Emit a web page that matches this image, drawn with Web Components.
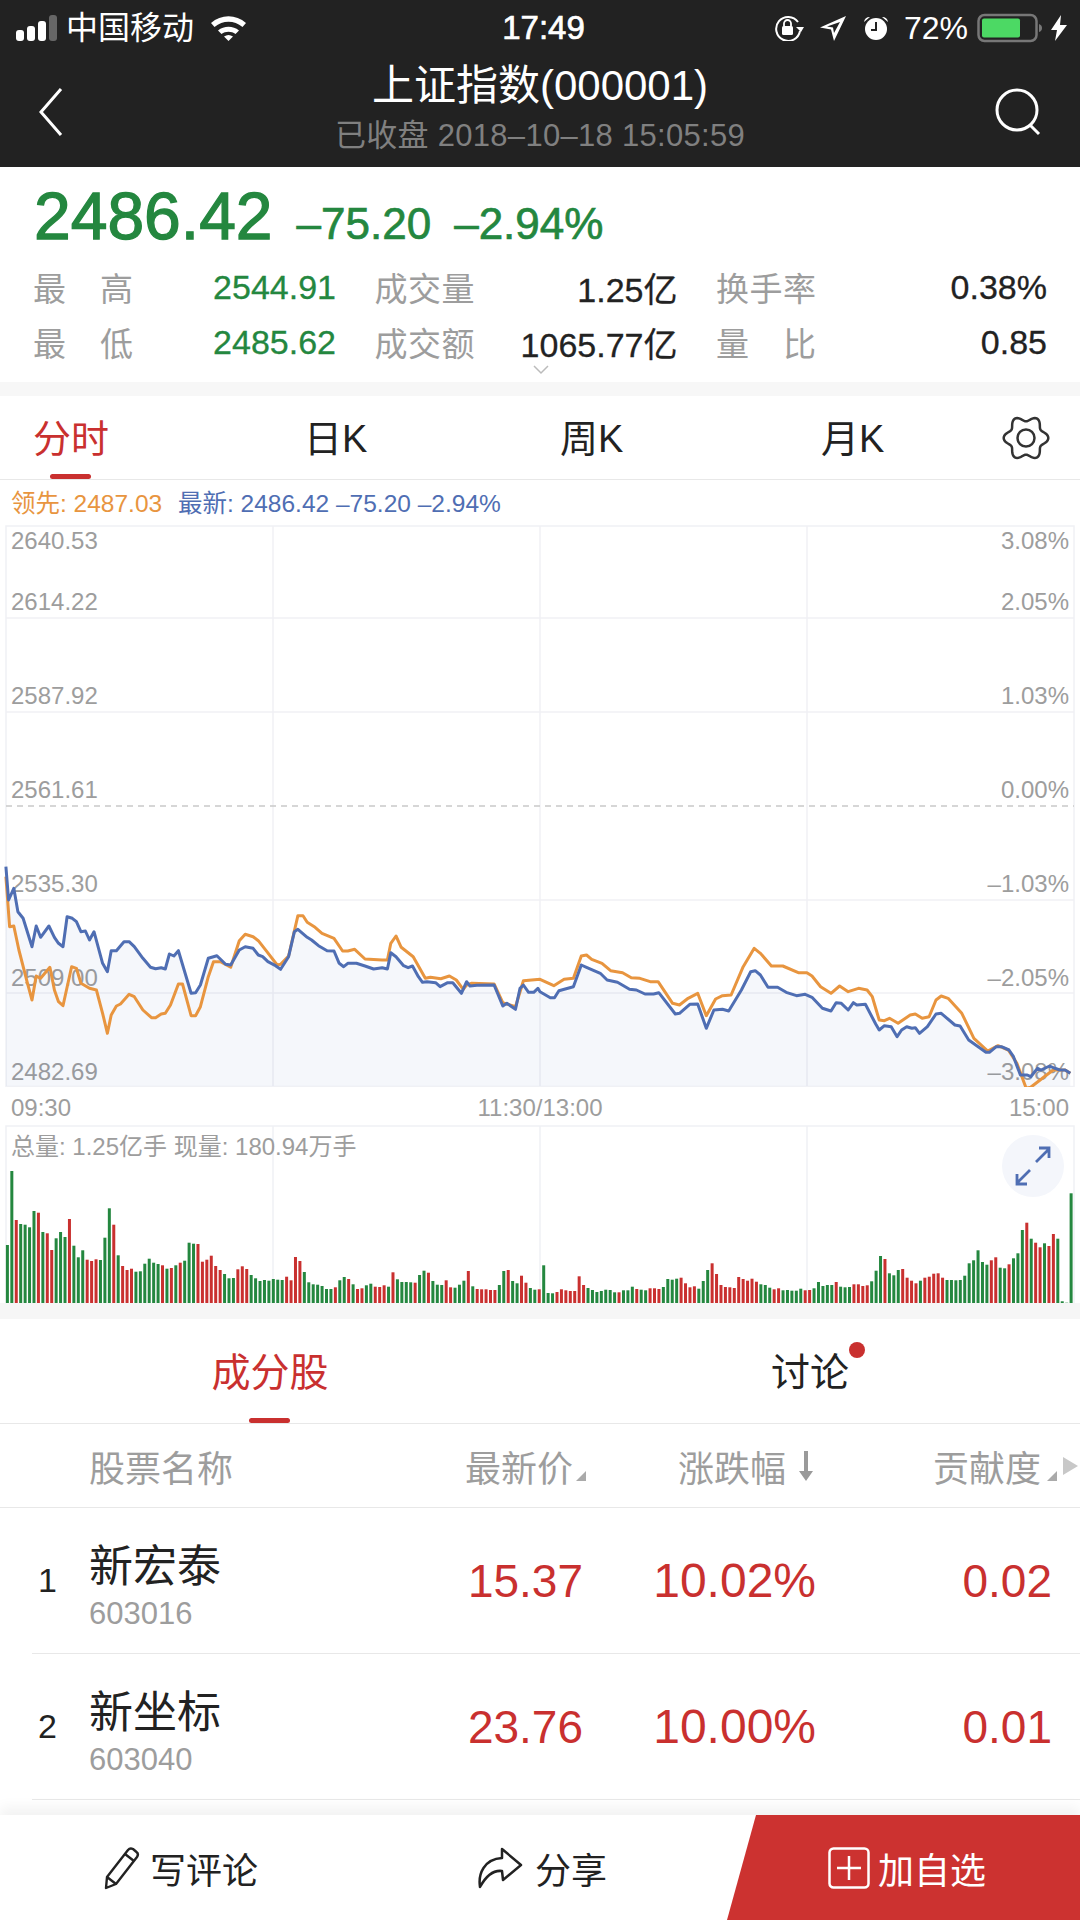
<!doctype html>
<html lang="zh-CN">
<head>
<meta charset="utf-8">
<title>上证指数</title>
<style>
  html, body { margin: 0; padding: 0; background: #fff; }
  body {
    width: 1080px;
    height: 1920px;
    overflow: hidden;
    display: flex;
    flex-direction: column;
    font-family: "Liberation Sans", "Noto Sans CJK SC", sans-serif;
    --red: #c9302f;
    --green: #24873f;
    --grey: #9d9d9d;
    --ink: #222;
    --line: #e8e8e8;
    --orange: #e8953f;
    --blue: #4f6eb3;
  }
</style>
</head>
<body>
  <app-header></app-header>
  <quote-panel></quote-panel>
  <period-tabs></period-tabs>
  <intraday-chart></intraday-chart>
  <volume-chart></volume-chart>
  <section-tabs></section-tabs>
  <stock-table>
    <stock-row rank="1" name="新宏泰" code="603016" price="15.37" pct="10.02%" share="0.02"></stock-row>
    <stock-row rank="2" name="新坐标" code="603040" price="23.76" pct="10.00%" share="0.01"></stock-row>
  </stock-table>
  <action-bar></action-bar>

<script>
function define(name, html, Base = HTMLElement) {
  const template = document.createElement("template");
  template.innerHTML = html;
  customElements.define(name, class extends Base {
    constructor() {
      super();
      this.attachShadow({ mode: "open" }).appendChild(template.content.cloneNode(true));
      if (this.setup) this.setup(this.shadowRoot);
    }
  });
}

define("app-header", `
  <style>
    :host { display: block; background: #222; color: #fff; height: 167px; flex: none; }
    #status {
      height: 56px;
      display: grid;
      grid-template-columns: 1fr auto 1fr;
      align-items: center;
      font-size: 32px;
      padding: 0 13px 0 16px;
    }
    #left, #right { display: flex; align-items: center; }
    #right { justify-content: flex-end; }
    #carrier { margin: 0 16px 0 9px; padding-bottom: 6px; }
    #time { font-size: 33px; -webkit-text-stroke: .7px #fff; margin-left: 4px; }
    #pct { margin: 0 9px 0 15px; }
    #nav {
      height: 111px;
      display: grid;
      grid-template-columns: 110px 1fr 110px;
      align-items: center;
    }
    #back { margin-left: 39px; display: block; }
    #search { margin-left: 24px; display: block; }
    #titles { text-align: center; padding-bottom: 1px; }
    #title { font-size: 42px; line-height: 50px; }
    #sub { font-size: 31px; letter-spacing: .3px; line-height: 50px; color: #808080; }
  </style>
  <div id="status">
    <div id="left">
      <svg width="41" height="26" viewBox="0 0 41 26">
        <rect x="0" y="15" width="8" height="11" rx="3" fill="#fff"/>
        <rect x="11" y="11" width="8" height="15" rx="3" fill="#fff"/>
        <rect x="22" y="6" width="8" height="20" rx="3" fill="#fff"/>
        <rect x="33" y="0" width="8" height="26" rx="3" fill="#666"/>
      </svg>
      <span id="carrier">中国移动</span>
      <svg width="37" height="26" viewBox="0 0 37 26">
        <path d="M1 8C11-1 26-1 36 8l-3.500 4C24 5 13 5 4.500 12z" fill="#fff"/>
        <path d="M8 15.500c6-5 15-5 21 0l-3.500 3.500c-4-3-10-3-14 0z" fill="#fff"/>
        <path d="M14 21.500c3-2 6-2 9 0l-4.500 4.500z" fill="#fff"/>
      </svg>
    </div>
    <div id="time">17:49</div>
    <div id="right">
      <svg width="30" height="26" viewBox="0 0 30 26" fill="none" stroke="#fff">
        <path d="M26 16a12 12 0 1 1-2-9" stroke-width="2"/>
        <path d="M22 12l5 5 3-5z" fill="#fff" stroke="none"/>
        <rect x="8" y="11" width="11" height="9" rx="1.500" fill="#fff" stroke="none"/>
        <path d="M10 11V8.500a3.500 3.500 0 0 1 7 0V11" stroke-width="1.800"/>
      </svg>
      <svg width="26" height="25" viewBox="0 0 26 25" style="margin-left:16px">
        <path d="M26 0L0 11.500l11 2L14 25z M20 6l-6 11-1-5.500-6-1z" fill="#fff" fill-rule="evenodd"/>
      </svg>
      <svg width="26" height="26" viewBox="0 0 26 26" style="margin-left:17px">
        <circle cx="13" cy="14" r="11" fill="#fff"/>
        <path d="M1 7a6 6 0 0 1 6-5z M25 7a6 6 0 0 0-6-5z" fill="#fff"/>
        <path d="M13 7v8h-5" fill="none" stroke="#222" stroke-width="2"/>
      </svg>
      <span id="pct">72%</span>
      <svg width="66" height="30" viewBox="0 0 66 30">
        <rect x="1.500" y="2" width="58" height="26" rx="6" fill="none" stroke="#777" stroke-width="2.500"/>
        <rect x="5" y="5.500" width="38" height="19" rx="2" fill="#4cd964"/>
        <path d="M62 11q3 1 3 4t-3 4z" fill="#777"/>
      </svg>
      <svg width="16" height="26" viewBox="0 0 16 26" style="margin-left:8px">
        <path d="M10 0L0 15h6L4 26 16 10H9z" fill="#fff"/>
      </svg>
    </div>
  </div>
  <div id="nav">
    <svg id="back" width="24" height="48" viewBox="0 0 24 48" fill="none" stroke="#fff" stroke-width="3">
      <path d="M22 1L2 24l20 23"/>
    </svg>
    <div id="titles">
      <div id="title">上证指数(000001)</div>
      <div id="sub">已收盘 2018–10–18 15:05:59</div>
    </div>
    <svg id="search" width="48" height="48" viewBox="0 0 48 48" fill="none" stroke="#fff" stroke-width="3">
      <circle cx="23" cy="22" r="20"/>
      <path d="M36 37l9 9"/>
    </svg>
  </div>
`);

define("quote-stat", `
  <style>
    :host { display: flex; justify-content: space-between; align-items: center; height: 55px; }
    #label { color: var(--grey); font-size: 33px; width: 100px; text-align: justify; text-align-last: justify; padding-bottom: 2px; }
    #value { font-size: 34px; color: var(--ink); -webkit-text-stroke: .3px currentColor; }
    :host([tone="down"]) #value { color: var(--green); }
  </style>
  <span id="label"></span><span id="value"></span>
`, class extends HTMLElement {
  connectedCallback() {
    this.shadowRoot.querySelector("#label").textContent = this.getAttribute("label");
    this.shadowRoot.querySelector("#value").textContent = this.getAttribute("value");
  }
});

define("quote-panel", `
  <style>
    :host { display: block; position: relative; height: 215px; flex: none; background: #fff; }
    #price {
      display: flex;
      align-items: baseline;
      gap: 23px;
      padding: 13px 0 0 34px;
      height: 72px;
      line-height: 72px;
      color: var(--green);
      font-size: 44px;
      -webkit-text-stroke: .7px var(--green);
    }
    #big { font-size: 66px; -webkit-text-stroke: 1.300px var(--green); margin-right: 1px; }
    #stats {
      margin-top: 8px;
      padding: 0 33px;
      display: grid;
      grid-template-columns: 303px 303px 331px;
      column-gap: 38.500px;
    }
    #more { position: absolute; left: 533px; top: 198px; }
  </style>
  <div id="price">
    <span id="big">2486.42</span><span>–75.20</span><span>–2.94%</span>
  </div>
  <div id="stats">
    <quote-stat label="最 高" value="2544.91" tone="down"></quote-stat>
    <quote-stat label="成交量" value="1.25亿"></quote-stat>
    <quote-stat label="换手率" value="0.38%"></quote-stat>
    <quote-stat label="最 低" value="2485.62" tone="down"></quote-stat>
    <quote-stat label="成交额" value="1065.77亿"></quote-stat>
    <quote-stat label="量 比" value="0.85"></quote-stat>
  </div>
  <svg id="more" width="16" height="10" viewBox="0 0 16 10" fill="none" stroke="#bbb" stroke-width="1.500">
    <path d="M1 1l7 7 7-7"/>
  </svg>
`);

define("period-tabs", `
  <style>
    :host {
      display: grid;
      flex: none;
      grid-template-columns: 271px 256px 261px 181px auto;
      align-items: center;
      height: 83px;
      margin-top: 14px;
      padding-left: 33px;
      box-sizing: content-box;
      border-bottom: 1px solid var(--line);
      font-size: 38px;
      color: var(--ink);
      position: relative;
      box-shadow: 0 -14px 0 #f7f7f7;
    }
    span { padding-bottom: 4px; }
    #active { color: var(--red); position: relative; }
    #active::after {
      content: "";
      position: absolute;
      left: 17px;
      bottom: -12px;
      width: 41px;
      height: 5px;
      border-radius: 3px;
      background: var(--red);
    }
  </style>
  <span id="active">分时</span><span>日K</span><span>周K</span><span>月K</span>
  <svg id="gear" width="48" height="46" viewBox="-24 -23 48 46" fill="none" stroke="#333" stroke-width="2.500">
    <path id="teeth"/>
    <circle r="8.500"/>
  </svg>
`, class extends HTMLElement {
  setup(root) {
    // six soft lobes, two of them straddle the top
    const points = [];
    for (let i = 0; i < 120; i++) {
      const a = (i / 120) * Math.PI * 2;
      const r = 19.500 + 2.800 * Math.cos(6 * a);
      points.push(`${(r * Math.cos(a)).toFixed(2)} ${(r * Math.sin(a)).toFixed(2)}`);
    }
    root.querySelector("#teeth").setAttribute("d", `M${points.join("L")}Z`);
  }
});

// points read off the reference, as x,y in page pixels
const zoomPoints = (left, right) => {
  const convert = (list, offset) => list.map(([x, y]) => [x / 2.904 + offset, 850 + y / 3]);
  return [...convert(left, 0), ...convert(right, 540)];
};

const blueLine = zoomPoints(
  [[17,50],[25,150],[40,115],[52,185],[67,205],[93,290],[105,228],[118,262],[142,228],[158,262],[170,280],[183,290],[195,200],[210,205],[222,215],[235,245],[248,243],[260,270],[273,245],[298,340],[312,365],[323,302],[338,302],[360,275],[375,275],[390,290],[415,325],[437,352],[452,356],[468,353],[480,357],[492,312],[505,318],[518,302],[555,430],[568,428],[582,405],[605,325],[630,317],[655,343],[670,345],[695,300],[712,290],[735,295],[750,315],[763,320],[778,335],[800,347],[815,358],[838,320],[855,245],[865,238],[892,262],[905,270],[925,287],[950,302],[970,303],[985,340],[998,350],[1010,340],[1035,340],[1060,348],[1085,357],[1110,353],[1125,357],[1135,308],[1150,320],[1172,347],[1185,353],[1198,348],[1215,380],[1227,397],[1240,395],[1265,398],[1278,410],[1300,398],[1315,398],[1340,430],[1355,395],[1365,408],[1385,406],[1435,405],[1460,468],[1472,460],[1497,478],[1510,415],[1520,405],[1535,427],[1550,427],[1562,415]],
  [[0,425],[30,443],[42,443],[55,422],[97,410],[120,345],[135,352],[175,370],[195,390],[225,397],[260,418],[280,420],[305,432],[330,432],[345,428],[393,492],[405,490],[435,463],[458,462],[483,535],[505,480],[530,478],[548,483],[585,420],[612,365],[625,362],[640,375],[662,412],[690,412],[715,427],[745,437],[770,433],[790,442],[820,475],[845,483],[860,458],[875,460],[895,480],[910,458],[920,465],[945,463],[975,522],[985,540],[1000,527],[1020,530],[1037,560],[1050,540],[1065,530],[1080,535],[1090,533],[1102,550],[1125,530],[1150,492],[1165,490],[1205,525],[1220,528],[1245,570],[1295,607],[1305,607],[1325,590],[1340,590],[1362,600],[1375,620],[1395,675],[1415,675],[1425,680],[1445,655],[1455,660],[1480,648],[1495,655],[1510,660],[1525,660],[1540,670]]
);

const orangeLine = zoomPoints(
  [[17,80],[28,230],[40,228],[55,300],[80,400],[93,450],[105,378],[118,385],[145,352],[158,420],[170,455],[183,467],[208,350],[222,355],[235,400],[260,415],[280,420],[298,490],[312,550],[323,495],[338,468],[350,462],[375,433],[390,440],[415,480],[440,503],[452,503],[468,492],[480,490],[495,465],[518,402],[530,402],[555,497],[568,497],[582,470],[605,380],[620,335],[640,335],[670,352],[695,272],[712,253],[735,260],[750,272],[775,305],[805,345],[815,343],[838,318],[865,197],[880,197],[892,217],[915,232],[935,250],[970,265],[995,303],[1010,303],[1030,298],[1060,327],[1110,330],[1125,330],[1135,280],[1150,258],[1165,292],[1200,320],[1235,385],[1250,382],[1280,386],[1305,378],[1325,390],[1345,418],[1355,405],[1370,400],[1435,402],[1460,458],[1497,470],[1520,392]],
  [[0,388],[40,407],[70,388],[97,385],[120,318],[135,315],[150,328],[180,340],[205,362],[240,368],[265,383],[290,385],[320,395],[343,395],[385,460],[405,465],[430,445],[458,430],[483,497],[510,447],[530,437],[555,435],[590,350],[622,295],[640,310],[672,348],[705,348],[750,368],[775,368],[790,378],[815,410],[845,430],[870,408],[895,425],[925,415],[950,420],[965,440],[985,510],[1000,512],[1015,505],[1040,520],[1075,495],[1090,492],[1110,505],[1130,500],[1150,450],[1165,438],[1185,445],[1225,490],[1260,565],[1300,603],[1330,587],[1360,600],[1385,640],[1412,715],[1425,712],[1490,660],[1525,660],[1540,670]]
);

const toPath = (points) => points.map(([x, y]) => `${x.toFixed(1)},${y.toFixed(1)}`).join(" ");

define("intraday-chart", `
  <style>
    :host { display: block; flex: none; background: #fff; font-size: 24px; color: var(--grey); }
    #legend {
      height: 45px;
      box-sizing: border-box;
      padding: 0 0 2px 11px;
      display: flex;
      align-items: center;
      font-size: 24.500px;
      white-space: pre;
    }
    #lead { color: var(--orange); width: 167px; }
    #latest { color: var(--blue); }
    #plot { position: relative; height: 562px; }
    #plot svg { position: absolute; left: 0; top: 0; display: block; }
    .tick { position: absolute; line-height: 28px; }
    .price { left: 11px; }
    .rate { right: 11px; }
    #axis {
      height: 38px;
      box-sizing: border-box;
      padding: 4px 11px 0;
      display: flex;
      justify-content: space-between;
      align-items: center;
    }
  </style>
  <div id="legend"><span id="lead">领先: 2487.03</span><span id="latest">最新: 2486.42 –75.20 –2.94%</span></div>
  <div id="plot">
    <div id="ticks"></div>
    <svg width="1080" height="562" viewBox="0 525 1080 562">
      <g id="grid" stroke="#f0f1f5" stroke-width="1.500" fill="none"></g>
      <polygon id="fill" fill="rgba(79,110,179,.055)"></polygon>
      <polyline id="orange" fill="none" stroke="#e8953f" stroke-width="3" stroke-linejoin="round"></polyline>
      <polyline id="blue" fill="none" stroke="#4f6eb3" stroke-width="3" stroke-linejoin="round"></polyline>
    </svg>
  </div>
  <div id="axis"><span>09:30</span><span>11:30/13:00</span><span>15:00</span></div>
`, class extends HTMLElement {
  setup(root) {
    const prices = ["2640.53", "2614.22", "2587.92", "2561.61", "2535.30", "2509.00", "2482.69"];
    const rates = ["3.08%", "2.05%", "1.03%", "0.00%", "–1.03%", "–2.05%", "–3.08%"];
    const middles = [541, 602, 696, 790, 884, 978, 1072];
    root.querySelector("#ticks").innerHTML = middles.map((y, i) => {
      const top = y - 525 - 14;
      return `<span class="tick price" style="top:${top}px">${prices[i]}</span>` +
        `<span class="tick rate" style="top:${top}px">${rates[i]}</span>`;
    }).join("");

    const rows = [618, 712, 900, 993];
    const columns = [273, 540, 807];
    root.querySelector("#grid").innerHTML =
      `<rect x="6" y="526" width="1068" height="560.500"/>` +
      rows.map((y) => `<path d="M6 ${y}H1074"/>`).join("") +
      columns.map((x) => `<path d="M${x} 526V1087"/>`).join("") +
      `<path d="M6 806H1074" stroke="#c9c9c9" stroke-dasharray="6 5"/>`;

    root.querySelector("#blue").setAttribute("points", toPath(blueLine));
    root.querySelector("#orange").setAttribute("points", toPath(orangeLine));
    const end = blueLine[blueLine.length - 1][0];
    root.querySelector("#fill").setAttribute("points", `${toPath(blueLine)} ${end},1086 6,1086`);
  }
});

const leftBars = "405g 183g 330r 342g 344g 352g 303g 308r 366g 370r 420r 385g 366g 381g 327r 407g 442g 421g 449r 453r 448r 450g 383g 295g 344r 436g 468r 480r 476r 485g 484g 461g 446g 458g 462g 466r 476g 474r 466g 458r 452g 398g 401g 402r 455r 449r 437r 468r 480r 492g 505g 504g 478r 469r 477r 495g 505g 513g 510g 512g 507g 509g 510g 500r 511r 441r 453r 486g 517g 523g 524g 528g 537g 537g 532r 511g 501g 507r 523g 537r 535r 526g 521g 530r 531r 526r 530g 487r 508g 516g 516g 517g 518r 495g 482g 488r 513g 524g 525g 511r 532r 533g 524g 512g 483r 529g 537r 538r 538r 540r 540r 525g 483g 480r 513g 520g 497r 518r 534g 539g 538r";
const rightBars = "466g 549g 550g 546r 538r 541r 543r 543r 499r 525r 534g 540g 546g 543g 539g 540g 547g 547r 541g 541g 530g 537r 539g 541g 535r 535r 537r 531g 507g 509g 506g 503r 520r 532r 529r 536g 513g 480g 460r 492r 525r 531r 532r 534r 501r 507r 512r 506r 515r 523g 525g 533g 538r 535r 541g 540g 542g 542g 536g 541r 540r 535g 516g 528g 525g 525g 516r 530g 532g 531g 523r 523r 528r 526r 514g 482g 438g 447r 490g 496g 480g 477r 503r 512r 520r 512g 503r 500r 491r 490r 503r 510g 510g 511g 510g 497g 460g 451g 421g 456g 464g 451r 442r 473g 475g 463r 445g 430g 360g 338r 386g 398r 412r 400g 408r 372r 386g 574g 578g 250g";

define("volume-chart", `
  <style>
    :host {
      display: block;
      flex: none;
      position: relative;
      height: 178px;
      background: #fff;
      border-bottom: 16px solid #f6f6f6;
      font-size: 24px;
      color: var(--grey);
    }
    svg { display: block; position: absolute; left: 0; top: 0; }
    #label { position: absolute; left: 11px; top: 6px; line-height: 32px; }
    #zoom {
      position: absolute;
      left: 1002px;
      top: 10px;
      width: 62px;
      height: 62px;
      border-radius: 50%;
      background: #f4f6fb;
    }
  </style>
  <svg width="1080" height="178" viewBox="0 1125 1080 178">
    <g id="grid" stroke="#f0f1f5" stroke-width="1.500" fill="none"></g>
    <g id="bars"></g>
  </svg>
  <div id="label">总量: 1.25亿手 现量: 180.94万手</div>
  <div id="zoom">
    <svg width="62" height="62" viewBox="0 0 62 62" fill="none" stroke="#4f6eb3" stroke-width="2.800">
      <path d="M34 27L47 14M37 13h10v10"/>
      <path d="M28 35L15 48M25 49H15V39"/>
    </svg>
  </div>
`, class extends HTMLElement {
  setup(root) {
    root.querySelector("#grid").innerHTML =
      `<path d="M6 1303V1126H1074V1303M273 1126V1303M540 1126V1303M807 1126V1303"/>`;
    const colors = { r: "#c9302f", g: "#24873f" };
    const rects = (list, start) => list.split(" ").map((item, i) => {
      const top = 1110 + parseInt(item) / 3;
      const x = start + i * 4.432;
      return `<rect x="${x.toFixed(2)}" y="${top.toFixed(1)}" width="3" height="${(1303 - top).toFixed(1)}" fill="${colors[item.slice(-1)]}"/>`;
    }).join("");
    root.querySelector("#bars").innerHTML = rects(leftBars, 5.900) + rects(rightBars, 542.200);
  }
});

define("section-tabs", `
  <style>
    :host {
      display: grid;
      flex: none;
      grid-template-columns: 1fr 1fr;
      height: 102px;
      padding-top: 2px;
      box-sizing: content-box;
      border-bottom: 1px solid var(--line);
      font-size: 39px;
      text-align: center;
      line-height: 104px;
      color: var(--ink);
    }
    span { position: relative; justify-self: center; height: 102px; }
    #on { color: var(--red); }
    #on::after {
      content: "";
      position: absolute;
      left: 38px;
      bottom: 0;
      width: 41px;
      height: 5px;
      border-radius: 3px;
      background: var(--red);
    }
    #dot {
      position: absolute;
      right: -16px;
      top: 21px;
      width: 16px;
      height: 16px;
      border-radius: 50%;
      background: var(--red);
    }
  </style>
  <span id="on">成分股</span>
  <span>讨论<i id="dot"></i></span>
`);

define("stock-row", `
  <style>
    :host {
      display: grid;
      grid-template-columns: 57px 311px 183px 233px 236px;
      align-items: center;
      height: 145px;
      margin-left: 32px;
      border-bottom: 1px solid var(--line);
      color: var(--red);
      font-size: 46px;
      text-align: right;
    }
    #rank { font-size: 34px; color: var(--ink); text-align: left; padding-left: 6px; }
    #who { text-align: left; padding-top: 13px; }
    #name { font-size: 44px; line-height: 50px; color: var(--ink); }
    #code { font-size: 31px; line-height: 38px; margin-top: 3px; color: var(--grey); }
    #pct { font-size: 48px; }
  </style>
  <span id="rank"></span>
  <div id="who"><div id="name"></div><div id="code"></div></div>
  <span id="price"></span><span id="pct"></span><span id="share"></span>
`, class extends HTMLElement {
  connectedCallback() {
    for (const key of ["rank", "name", "code", "price", "pct", "share"]) {
      this.shadowRoot.querySelector(`#${key}`).textContent = this.getAttribute(key);
    }
  }
});

define("stock-table", `
  <style>
    :host { display: block; flex: none; }
    #head {
      display: grid;
      grid-template-columns: 376px 213px 255px 1fr;
      align-items: center;
      height: 83px;
      padding-left: 89px;
      border-bottom: 1px solid var(--line);
      font-size: 36px;
      color: var(--grey);
    }
    #head span { display: flex; align-items: center; }
    .corner {
      width: 0;
      height: 0;
      margin: 20px 0 0 3px;
      border-left: 10px solid transparent;
      border-bottom: 10px solid #aaa;
    }
    #down { margin-left: 13px; display: block; }
    #next {
      width: 0;
      height: 0;
      margin-left: 6px;
      border-left: 15px solid #c8c8c8;
      border-top: 9px solid transparent;
      border-bottom: 9px solid transparent;
    }
  </style>
  <div id="head">
    <span>股票名称</span>
    <span>最新价<i class="corner"></i></span>
    <span>涨跌幅<svg id="down" width="14" height="30" viewBox="0 0 14 30"><path d="M5 0h4v20h5l-7 10-7-10h5z" fill="#9a9a9a"/></svg></span>
    <span>贡献度<i class="corner" style="margin-left:6px"></i><i id="next"></i></span>
  </div>
  <slot></slot>
`);

define("action-bar", `
  <style>
    :host {
      display: flex;
      flex: none;
      height: 105px;
      margin-top: auto;
      background: #fff;
      font-size: 36px;
      color: var(--ink);
      box-shadow: 0 -8px 12px rgba(0,0,0,.05);
      position: relative;
    }
    #left { flex: 1; display: flex; align-items: center; padding-left: 103px; }
    .item { display: flex; align-items: center; gap: 10px; }
    #share { margin-left: 218px; }
    #share svg { margin-right: 1px; }
    #add {
      width: 353px;
      box-sizing: border-box;
      padding-left: 101px;
      display: flex;
      align-items: center;
      gap: 8px;
      color: #fff;
      background: #cc3230;
      clip-path: polygon(29px 0, 100% 0, 100% 100%, 0 100%);
    }
  </style>
  <div id="left">
    <div class="item">
      <svg width="37" height="44" viewBox="0 0 37 44" fill="none" stroke="#222" stroke-width="2.400" stroke-linejoin="round">
        <path d="M3 42L4 31 25 4Q27 1.500 30 3L33.500 6Q36 8 34 11L13 38Z"/>
        <path d="M22 8L31 15M4 31L13 38"/>
      </svg>
      <span>写评论</span>
    </div>
    <div class="item" id="share">
      <svg width="48" height="44" viewBox="0 0 48 44" fill="none" stroke="#222" stroke-width="2.500" stroke-linejoin="round">
        <path d="M26 3L45 19 27 34 26 25C18 24 10 30 4 41 2 28 8 13 26 12Z"/>
      </svg>
      <span>分享</span>
    </div>
  </div>
  <div id="add">
    <svg width="42" height="42" viewBox="0 0 42 42" fill="none" stroke="#fff" stroke-width="2.500">
      <rect x="1.500" y="1.500" width="39" height="39" rx="4"/>
      <path d="M9 21H33M21 9V33"/>
    </svg>
    <span>加自选</span>
  </div>
`);
</script>
</body>
</html>
